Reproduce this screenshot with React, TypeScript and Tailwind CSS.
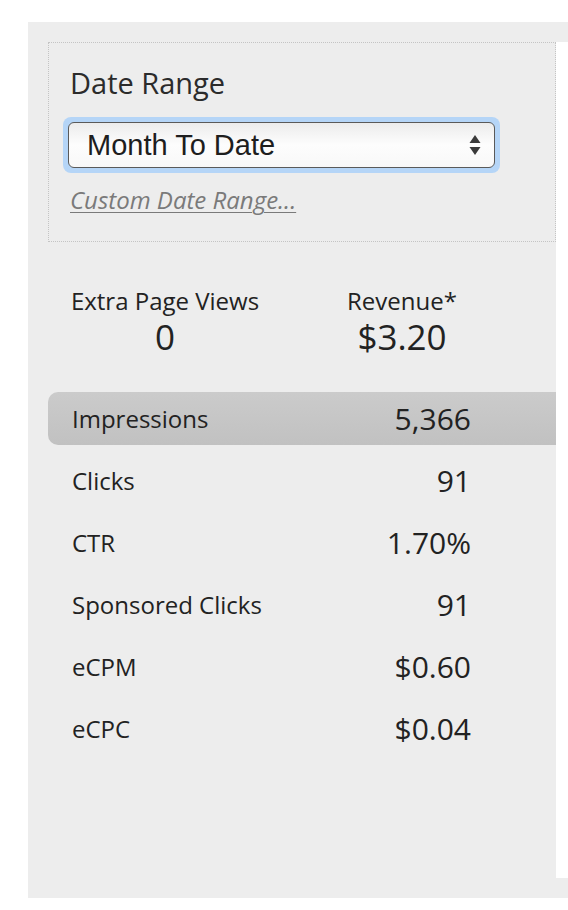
import React from "react";

const rows: { label: string; value: string; active?: boolean }[] = [
  { label: "Impressions", value: "5,366", active: true },
  { label: "Clicks", value: "91" },
  { label: "CTR", value: "1.70%" },
  { label: "Sponsored Clicks", value: "91" },
  { label: "eCPM", value: "$0.60" },
  { label: "eCPC", value: "$0.04" },
];

export default function App() {
  return (
    <div
      className="w-[568px] h-[910px] bg-white overflow-hidden pt-[22px] pl-[28px]"
      style={{ fontFamily: '"Open Sans", "Noto Sans", sans-serif' }}
    >
      <div className="bg-[#ededed] w-[540px] h-[876px] pt-[20px] pb-[20px] pl-[20px] flex">
        <div className="w-[508px] flex flex-col text-[#333]">
          <div className="h-[200px] border border-dotted border-[#c4c4c4] pl-[21px] pt-[21px]">
            <div className="text-[29px] leading-[38px] text-[#2b2b2b]">Date Range</div>
            <div className="mt-[15px] w-[437px] h-[56px] ml-[-7px] rounded-[8px] bg-[#b5d5f7] p-[5px]">
              <div className="h-full rounded-[6px] border border-[#5a5a5a] bg-gradient-to-b from-[#ececec] via-[#fdfdfd] to-[#f8f8f8] flex items-center pl-[18px] pr-[10px]">
                <span
                  className="text-[29px] leading-none text-[#1e1e1e] flex-1"
                  style={{ fontFamily: '"Liberation Sans", Arial, sans-serif' }}
                >
                  Month To Date
                </span>
                <svg width="12" height="22" viewBox="0 0 12 22" className="mr-[3px]">
                  <path d="M6 1 L11.5 9 L0.5 9 Z" fill="#3a3a3a" />
                  <path d="M6 21 L11.5 13 L0.5 13 Z" fill="#3a3a3a" />
                </svg>
              </div>
            </div>
            <div className="mt-[12px] text-[24px] leading-[30px] italic underline decoration-[1px] underline-offset-[3px] text-[#7a7a7a]">
              Custom Date Range...
            </div>
          </div>

          <div className="flex mt-[44px]">
            <div className="w-[234px] text-center">
              <div className="text-[24px] leading-[30px] text-[#222]">Extra Page Views</div>
              <div className="text-[35px] leading-[42px] text-[#222]">0</div>
            </div>
            <div className="w-[240px] text-center">
              <div className="text-[24px] leading-[30px] text-[#222]">Revenue*</div>
              <div className="text-[35px] leading-[42px] text-[#222]">$3.20</div>
            </div>
          </div>

          <div className="mt-[34px] flex flex-col gap-[9px]">
            {rows.map((r) => (
              <div
                key={r.label}
                className={
                  "h-[53px] flex items-center pl-[24px] pr-[85px] " +
                  (r.active
                    ? "rounded-l-[10px] bg-gradient-to-b from-[#cbcbcb] to-[#c1c1c1]"
                    : "")
                }
              >
                <span className="flex-1 text-[24px] text-[#222]">{r.label}</span>
                <span className="text-[30px] text-[#222]">{r.value}</span>
              </div>
            ))}
          </div>
        </div>
        <div className="flex-1 bg-white h-[836px]" />
      </div>
    </div>
  );
}
